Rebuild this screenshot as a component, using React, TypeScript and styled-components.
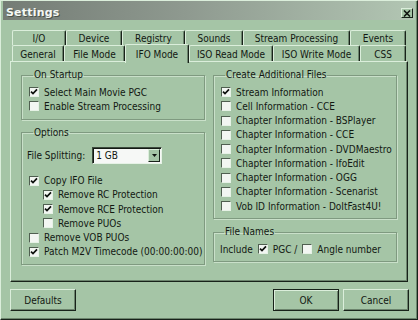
import styled, { createGlobalStyle } from 'styled-components';

const BG = '#a5c5a6';
const LIGHT = '#dbeedb';
const DARK = '#18221a';
const SHADE = '#6c846d';

const GlobalStyle = createGlobalStyle`
  html, body {
    margin: 0;
    padding: 0;
    background: ${BG};
  }
  body {
    font-family: "DejaVu Sans Condensed", "DejaVu Sans", sans-serif;
    font-stretch: condensed;
    font-size: 10px;
    color: #121812;
  }
`;

const backTabs = [
  { label: 'I/O', w: 54 },
  { label: 'Device', w: 56 },
  { label: 'Registry', w: 63 },
  { label: 'Sounds', w: 58 },
  { label: 'Stream Processing', w: 107 },
  { label: 'Events', w: 56 },
];

const frontTabs = [
  { label: 'General', w: 52 },
  { label: 'File Mode', w: 61 },
  { label: 'IFO Mode', w: 64, active: true },
  { label: 'ISO Read Mode', w: 84 },
  { label: 'ISO Write Mode', w: 87 },
  { label: 'CSS', w: 46 },
];

const extraFiles = [
  { label: 'Stream Information', checked: true },
  { label: 'Cell Information - CCE' },
  { label: 'Chapter Information - BSPlayer' },
  { label: 'Chapter Information - CCE' },
  { label: 'Chapter Information - DVDMaestro' },
  { label: 'Chapter Information - IfoEdit' },
  { label: 'Chapter Information - OGG' },
  { label: 'Chapter Information - Scenarist' },
  { label: 'Vob ID Information - DoItFast4U!' },
];

const CheckBox = ({ checked }: { checked?: boolean }) => (
  <Box>
    {checked ? (
      <svg width="8" height="8" viewBox="0 0 8 8">
        <path d="M1 3.6 L3 5.6 L7 1.4" fill="none" stroke="#0c100c" strokeWidth="1.7" />
      </svg>
    ) : null}
  </Box>
);

const Check = ({ label, checked, indent }: { label: string; checked?: boolean; indent?: boolean }) => (
  <Row $indent={indent}>
    <CheckBox checked={checked} />
    <span>{label}</span>
  </Row>
);

const App = () => {
  return (
    <>
      <GlobalStyle />
      <Window>
        <TitleBar>
          <Title>Settings</Title>
          <CloseButton>
            <svg width="8" height="7" viewBox="0 0 8 7">
              <path d="M1 0.5 L7 6.5 M7 0.5 L1 6.5" stroke="#101410" strokeWidth="1.6" />
            </svg>
          </CloseButton>
        </TitleBar>

        <Tabs>
          <TabRow>
            {backTabs.map(t => (
              <Tab key={t.label} $w={t.w}>
                {t.label}
              </Tab>
            ))}
          </TabRow>
          <TabRow $front>
            {frontTabs.map(t => (
              <Tab key={t.label} $w={t.w} $active={t.active} $front>
                {t.label}
              </Tab>
            ))}
          </TabRow>
        </Tabs>

        <Panel>
          <Column>
            <Group>
              <Legend>On Startup</Legend>
              <Check label="Select Main Movie PGC" checked />
              <Check label="Enable Stream Processing" />
            </Group>
            <Group>
              <Legend>Options</Legend>
              <SplitRow>
                <span>File Splitting:</span>
                <Combo>
                  <ComboText>1 GB</ComboText>
                  <ComboButton>
                    <svg width="5" height="3" viewBox="0 0 5 3">
                      <path d="M0 0 H5 L2.5 3 Z" fill="#101410" />
                    </svg>
                  </ComboButton>
                </Combo>
              </SplitRow>
              <Check label="Copy IFO File" checked />
              <Check label="Remove RC Protection" checked indent />
              <Check label="Remove RCE Protection" checked indent />
              <Check label="Remove PUOs" indent />
              <Check label="Remove VOB PUOs" />
              <Check label="Patch M2V Timecode (00:00:00:00)" checked />
            </Group>
          </Column>
          <Column>
            <Group>
              <Legend>Create Additional Files</Legend>
              {extraFiles.map(f => (
                <Check key={f.label} label={f.label} checked={f.checked} />
              ))}
            </Group>
            <Group $tight>
              <Legend>File Names</Legend>
              <IncludeRow>
                <span>Include</span>
                <CheckBox checked />
                <span>PGC /</span>
                <CheckBox />
                <span>Angle number</span>
              </IncludeRow>
            </Group>
          </Column>
        </Panel>

        <ButtonBar>
          <Button>Defaults</Button>
          <Spacer />
          <Button $default>OK</Button>
          <Button>Cancel</Button>
        </ButtonBar>
      </Window>
    </>
  );
};

export default App;

const Window = styled.div`
  width: 418px;
  height: 320px;
  box-sizing: border-box;
  background: ${BG};
  border: 1px solid;
  border-color: ${LIGHT} ${DARK} ${DARK} ${LIGHT};
  box-shadow: inset -1px -1px ${SHADE};
  padding: 0 2px;
  display: flex;
  flex-direction: column;
`;

const TitleBar = styled.div`
  height: 19px;
  display: flex;
  align-items: flex-start;
  justify-content: space-between;
  background: linear-gradient(90deg, #747c75 0%, #8f9a90 45%, #b2c6b3 100%);
  padding: 0 2px 0 3px;
`;

const Title = styled.div`
  color: #f4f8f4;
  font-family: "DejaVu Sans", sans-serif;
  font-stretch: normal;
  font-weight: bold;
  font-size: 11px;
  line-height: 23px;
  text-shadow: 1px 1px 0 #4a524a;
  letter-spacing: 0.2px;
`;

const CloseButton = styled.div`
  margin-top: 7px;
  width: 12px;
  height: 10px;
  box-sizing: border-box;
  background: ${BG};
  border: 1px solid;
  border-color: ${LIGHT} ${DARK} ${DARK} ${LIGHT};
  display: flex;
  align-items: center;
  justify-content: center;
`;

const Tabs = styled.div`
  margin-top: 10px;
  padding-left: 9px;
  display: flex;
  flex-direction: column;
`;

const TabRow = styled.div<{ $front?: boolean }>`
  display: flex;
  height: ${p => (p.$front ? 16 : 15)}px;
  align-items: flex-end;
`;

const Tab = styled.div<{ $w: number; $active?: boolean; $front?: boolean }>`
  width: ${p => p.$w}px;
  height: ${p => (p.$active ? 19 : p.$front ? 16 : 15)}px;
  box-sizing: border-box;
  display: flex;
  align-items: center;
  justify-content: center;
  padding-top: ${p => (p.$active ? 0 : 1)}px;
  background: ${BG};
  border-top: 1px solid ${LIGHT};
  border-left: 1px solid ${LIGHT};
  border-right: 1px solid ${DARK};
  box-shadow: inset -1px 0 ${SHADE};
  border-radius: 2px 2px 0 0;
  white-space: nowrap;
  position: relative;
  z-index: ${p => (p.$active ? 2 : 0)};
  margin-bottom: ${p => (p.$active ? -2 : 0)}px;
`;

const Panel = styled.div`
  width: 398px;
  height: 221px;
  margin-left: 7px;
  box-sizing: border-box;
  border: 1px solid;
  border-color: ${LIGHT} ${DARK} ${DARK} ${LIGHT};
  box-shadow: inset -1px -1px ${SHADE};
  padding: 7px 10px 0 10px;
  display: grid;
  grid-template-columns: 184px 184px;
  column-gap: 8px;
  align-items: start;
`;

const Column = styled.div`
  display: flex;
  flex-direction: column;
  gap: 7px;
`;

const Group = styled.fieldset<{ $tight?: boolean }>`
  margin: 0;
  min-width: 0;
  border: 1px solid #7f9a80;
  box-shadow: 1px 1px 0 #c9e0c9, inset 1px 1px 0 #c9e0c9;
  padding: ${p => (p.$tight ? '4px 6px 4px 6px' : '4px 6px 5px 7px')};
`;

const Legend = styled.legend`
  padding: 0 1px;
  margin-left: 4px;
  line-height: 12px;
`;

const Row = styled.div<{ $indent?: boolean }>`
  height: 14.25px;
  display: flex;
  align-items: center;
  white-space: nowrap;
  padding-left: ${p => (p.$indent ? 14 : 0)}px;
`;

const Box = styled.div`
  width: 10px;
  height: 10px;
  flex: none;
  box-sizing: border-box;
  margin-right: 5px;
  background: #f2f6f2;
  border: 1px solid;
  border-color: #4f5f50 #e6f2e6 #e6f2e6 #4f5f50;
  display: flex;
  align-items: center;
  justify-content: center;
`;

const SplitRow = styled.div`
  height: 17px;
  margin: 4px 0 10px -2px;
  display: flex;
  align-items: center;
  gap: 7px;
`;

const Combo = styled.div`
  width: 70px;
  height: 17px;
  box-sizing: border-box;
  background: #f6f8f6;
  border: 1px solid;
  border-color: #3c4a3d #e6f2e6 #e6f2e6 #3c4a3d;
  box-shadow: inset 1px 1px #131a13;
  display: flex;
  align-items: center;
  justify-content: space-between;
  padding: 1px 1px 1px 3px;
`;

const ComboText = styled.span`
  padding-top: 1px;
`;

const ComboButton = styled.div`
  width: 12px;
  height: 13px;
  box-sizing: border-box;
  background: ${BG};
  border: 1px solid;
  border-color: ${LIGHT} ${DARK} ${DARK} ${LIGHT};
  display: flex;
  align-items: center;
  justify-content: center;
`;

const IncludeRow = styled.div`
  height: 14.25px;
  display: flex;
  align-items: center;
  white-space: nowrap;
  gap: 5px;

  & > div {
    margin-right: 0;
  }
`;

const ButtonBar = styled.div`
  margin-top: 7px;
  padding: 0 6px 0 7px;
  display: flex;
  gap: 4px;
`;

const Spacer = styled.div`
  flex: 1;
`;

const Button = styled.div<{ $default?: boolean }>`
  width: 66px;
  height: 22px;
  box-sizing: border-box;
  display: flex;
  align-items: center;
  justify-content: center;
  background: ${BG};
  border: 1px solid;
  border-color: ${p => (p.$default ? `${DARK}` : `${LIGHT} ${DARK} ${DARK} ${LIGHT}`)};
  box-shadow: ${p =>
    p.$default ? `inset 1px 1px ${LIGHT}, inset -1px -1px ${SHADE}` : `inset -1px -1px ${SHADE}`};
`;
